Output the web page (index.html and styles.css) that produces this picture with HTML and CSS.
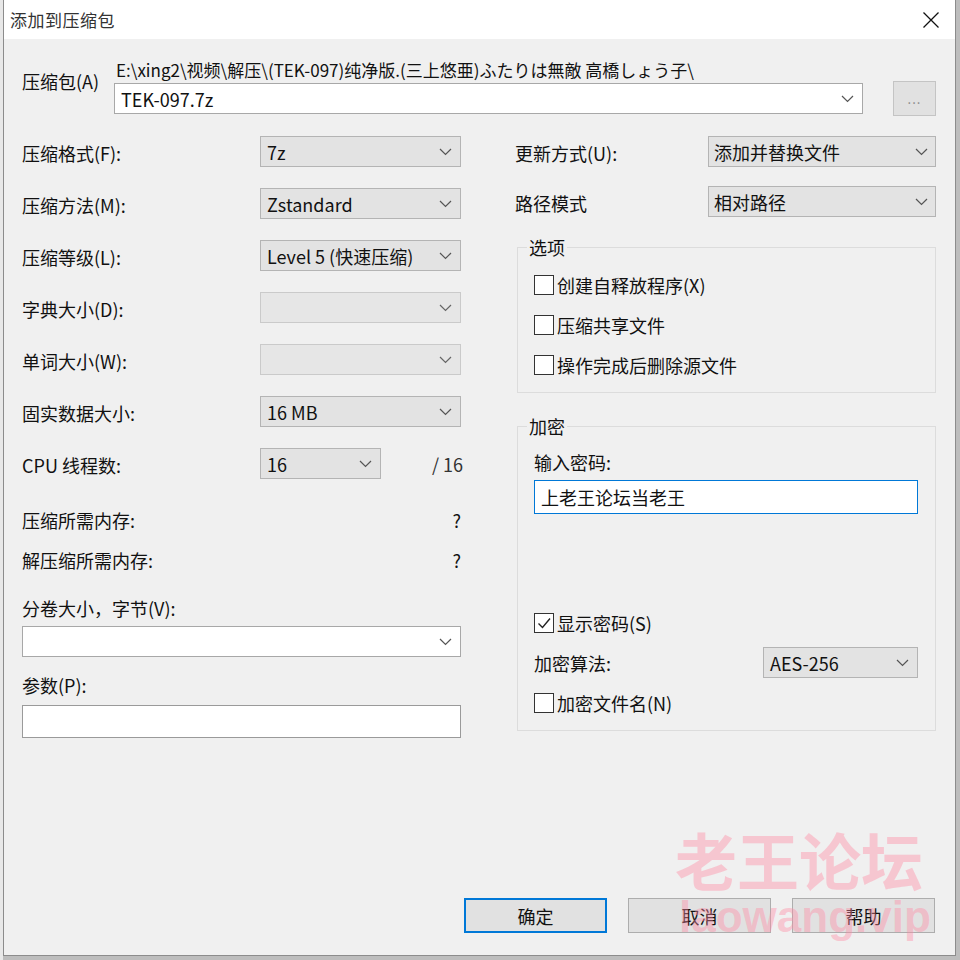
FILE: index.html
```html
<!DOCTYPE html>
<html lang="zh-CN">
<head>
<meta charset="utf-8">
<title>添加到压缩包</title>
<link rel="stylesheet" href="styles.css">
</head>
<body>
<div class="desktop">
  <div class="window">
    <div class="titlebar">
      <span class="title">添加到压缩包</span>
      <span class="close">
        <svg width="18" height="18" viewBox="0 0 18 18"><path d="M1.5 1.5 L16.5 16.5 M16.5 1.5 L1.5 16.5" stroke="#111" stroke-width="1.3" fill="none"/></svg>
      </span>
    </div>
    <div class="content">
      <div class="archive-row">
        <div class="archive-label">压缩包(A)</div>
        <div class="archive-main">
          <div class="path">E:\xing2\视频\解压\(TEK-097)纯净版.(三上悠亜)ふたりは無敵 高橋しょう子\</div>
          <div class="archive-combo-row">
            <div class="combo combo-white combo-archive"><span class="combo-text">TEK-097.7z</span><svg class="chev" width="13" height="8" viewBox="0 0 13 8"><path d="M1 1 L6.5 6.5 L12 1" stroke="#555" stroke-width="1.2" fill="none"/></svg></div>
            <div class="btn-browse">...</div>
          </div>
        </div>
      </div>

      <div class="columns">
        <div class="left-col">
          <div class="form-grid">
            <div class="lbl">压缩格式(F):</div>
            <div class="combo"><span class="combo-text">7z</span><svg class="chev" width="13" height="8" viewBox="0 0 13 8"><path d="M1 1 L6.5 6.5 L12 1" stroke="#555" stroke-width="1.2" fill="none"/></svg></div>

            <div class="lbl">压缩方法(M):</div>
            <div class="combo"><span class="combo-text">Zstandard</span><svg class="chev" width="13" height="8" viewBox="0 0 13 8"><path d="M1 1 L6.5 6.5 L12 1" stroke="#555" stroke-width="1.2" fill="none"/></svg></div>

            <div class="lbl">压缩等级(L):</div>
            <div class="combo"><span class="combo-text">Level 5 (快速压缩)</span><svg class="chev" width="13" height="8" viewBox="0 0 13 8"><path d="M1 1 L6.5 6.5 L12 1" stroke="#555" stroke-width="1.2" fill="none"/></svg></div>

            <div class="lbl">字典大小(D):</div>
            <div class="combo combo-disabled"><span class="combo-text"></span><svg class="chev" width="13" height="8" viewBox="0 0 13 8"><path d="M1 1 L6.5 6.5 L12 1" stroke="#666" stroke-width="1.2" fill="none"/></svg></div>

            <div class="lbl">单词大小(W):</div>
            <div class="combo combo-disabled"><span class="combo-text"></span><svg class="chev" width="13" height="8" viewBox="0 0 13 8"><path d="M1 1 L6.5 6.5 L12 1" stroke="#666" stroke-width="1.2" fill="none"/></svg></div>

            <div class="lbl">固实数据大小:</div>
            <div class="combo"><span class="combo-text">16 MB</span><svg class="chev" width="13" height="8" viewBox="0 0 13 8"><path d="M1 1 L6.5 6.5 L12 1" stroke="#555" stroke-width="1.2" fill="none"/></svg></div>

            <div class="lbl">CPU 线程数:</div>
            <div class="cpu-cell">
              <div class="combo combo-cpu"><span class="combo-text">16</span><svg class="chev" width="13" height="8" viewBox="0 0 13 8"><path d="M1 1 L6.5 6.5 L12 1" stroke="#555" stroke-width="1.2" fill="none"/></svg></div>
              <span class="cpu-total">/ 16</span>
            </div>
          </div>

          <div class="mem-row mem-first"><span>压缩所需内存:</span><span>?</span></div>
          <div class="mem-row"><span>解压缩所需内存:</span><span>?</span></div>

          <div class="field-label">分卷大小，字节(V):</div>
          <div class="combo combo-white combo-full"><span class="combo-text"></span><svg class="chev" width="13" height="8" viewBox="0 0 13 8"><path d="M1 1 L6.5 6.5 L12 1" stroke="#555" stroke-width="1.2" fill="none"/></svg></div>

          <div class="field-label">参数(P):</div>
          <div class="textbox"></div>
        </div>

        <div class="right-col">
          <div class="rrow">
            <div class="rlbl">更新方式(U):</div>
            <div class="combo combo-right"><span class="combo-text">添加并替换文件</span><svg class="chev" width="13" height="8" viewBox="0 0 13 8"><path d="M1 1 L6.5 6.5 L12 1" stroke="#555" stroke-width="1.2" fill="none"/></svg></div>
          </div>
          <div class="rrow rrow-second">
            <div class="rlbl">路径模式</div>
            <div class="combo combo-right"><span class="combo-text">相对路径</span><svg class="chev" width="13" height="8" viewBox="0 0 13 8"><path d="M1 1 L6.5 6.5 L12 1" stroke="#555" stroke-width="1.2" fill="none"/></svg></div>
          </div>

          <fieldset class="group group-options">
            <legend>选项</legend>
            <div class="check"><span class="box"></span><span>创建自释放程序(X)</span></div>
            <div class="check"><span class="box"></span><span>压缩共享文件</span></div>
            <div class="check"><span class="box"></span><span>操作完成后删除源文件</span></div>
          </fieldset>

          <fieldset class="group group-crypt">
            <legend>加密</legend>
            <div class="pw-label">输入密码:</div>
            <div class="pw-input">上老王论坛当老王</div>
            <div class="check check-show"><span class="box"><svg width="18" height="18" viewBox="0 0 18 18"><path d="M3.5 9.5 L7.5 13.5 L15 4.5" stroke="#222" stroke-width="1.4" fill="none"/></svg></span><span>显示密码(S)</span></div>
            <div class="algo-row">
              <span>加密算法:</span>
              <div class="combo combo-algo"><span class="combo-text">AES-256</span><svg class="chev" width="13" height="8" viewBox="0 0 13 8"><path d="M1 1 L6.5 6.5 L12 1" stroke="#555" stroke-width="1.2" fill="none"/></svg></div>
            </div>
            <div class="check check-last"><span class="box"></span><span>加密文件名(N)</span></div>
          </fieldset>
        </div>
      </div>

      <div class="buttons">
        <div class="btn btn-default">确定</div>
        <div class="btn">取消</div>
        <div class="btn">帮助</div>
      </div>
    </div>
    <div class="watermark">
      <div class="wm-cn">老王论坛</div>
      <div class="wm-en">laowang.vip</div>
    </div>
  </div>
</div>
</body>
</html>
```

FILE: styles.css
```css
* { box-sizing: border-box; }

html, body {
  margin: 0;
  padding: 0;
}

body {
  width: 960px;
  height: 960px;
  overflow: hidden;
  background: #cfcfcf;
  font-family: "Noto Sans CJK SC", "Noto Sans CJK JP", sans-serif;
  font-size: 18px;
  color: #111;
}

.desktop {
  width: 960px;
  height: 960px;
  background: linear-gradient(90deg, #e8e8e8 0 3px, #bdbdbd 3px);
}

.window {
  position: relative;
  margin-left: 3px;
  width: 953px;
  height: 956px;
  background: #f0f0f0;
  border: 1px solid #8c8c8c;
  border-top: none;
  display: flex;
  flex-direction: column;
}

.titlebar {
  height: 39px;
  background: #fff;
  display: flex;
  align-items: center;
  justify-content: space-between;
  padding: 0 15px 0 6px;
  flex: none;
}

.title {
  font-size: 17px;
  color: #333;
  letter-spacing: 0.5px;
}

.close {
  display: flex;
  width: 18px;
  height: 18px;
}

.content {
  flex: 1;
  display: flex;
  flex-direction: column;
  padding: 20px 19px 22px 18px;
}

/* archive row */
.archive-row {
  display: flex;
}

.archive-label {
  width: 92px;
  margin-top: 11px;
  line-height: 22px;
  flex: none;
}

.archive-main {
  flex: 1;
}

.path {
  line-height: 22px;
  padding-left: 2px;
  font-size: 17px;
  white-space: nowrap;
}

.archive-combo-row {
  display: flex;
  align-items: center;
  gap: 30px;
  height: 35px;
}

.btn-browse {
  width: 43px;
  height: 35px;
  background: #e1e1e1;
  border: 1px solid #c4c4c4;
  color: #888;
  font-size: 13px;
  display: flex;
  align-items: center;
  justify-content: center;
  letter-spacing: 1px;
}

/* combos */
.combo {
  height: 31px;
  background: #e3e3e3;
  border: 1px solid #b4b4b4;
  display: flex;
  align-items: center;
  justify-content: space-between;
  padding: 0 8px 0 6px;
}

.combo-text {
  white-space: nowrap;
  line-height: 1;
}

.combo-white {
  background: #fff;
  border-color: #a8a8a8;
}

.combo-archive {
  flex: 1;
}

.combo-disabled {
  background: #e6e6e6;
  border-color: #cacaca;
}

.chev {
  flex: none;
}

/* columns */
.columns {
  display: flex;
  gap: 54px;
  margin-top: 20px;
}

.left-col {
  width: 439px;
  flex: none;
  display: flex;
  flex-direction: column;
}

.right-col {
  width: 421px;
  flex: none;
  display: flex;
  flex-direction: column;
}

.form-grid {
  display: grid;
  grid-template-columns: 238px 201px;
  grid-auto-rows: 31px;
  row-gap: 21px;
  align-items: center;
}

.lbl {
  line-height: 22px;
  padding-top: 3px;
}

.cpu-cell {
  display: flex;
  align-items: center;
  justify-content: space-between;
  margin-right: -2px;
}

.combo-cpu {
  width: 121px;
}

.cpu-total {
  color: #333;
}

.mem-row {
  height: 40px;
  display: flex;
  align-items: center;
  justify-content: space-between;
  padding-right: 0;
}

.mem-first {
  margin-top: 21px;
}

.field-label {
  line-height: 22px;
  margin-top: 17px;
}

.combo-full {
  margin-top: 7px;
}

.textbox {
  margin-top: 9px;
  height: 33px;
  background: #fff;
  border: 1px solid #9a9a9a;
}

/* right column */
.rrow {
  display: flex;
  align-items: center;
  height: 31px;
}

.rrow-second {
  margin-top: 19px;
}

.rlbl {
  width: 193px;
  flex: none;
  padding-top: 2px;
}

.combo-right {
  flex: 1;
  padding-right: 7px;
  padding-left: 5px;
}

.group {
  margin: 19px 0 0 2px;
  border: 1px solid #dcdcdc;
  padding: 0 17px 7px 16px;
  min-width: 0;
}

.group legend {
  line-height: 22px;
  padding: 0 2px;
  margin-left: -7px;
}

.group-options {
  padding-top: 7px;
}

.group-crypt {
  margin-top: 22px;
}

.check {
  display: flex;
  align-items: center;
  height: 40px;
  gap: 3px;
}

.box {
  width: 20px;
  height: 20px;
  border: 1px solid #333;
  background: #fff;
  display: flex;
  align-items: center;
  justify-content: center;
  flex: none;
}

.pw-label {
  line-height: 22px;
  margin-top: 14px;
}

.pw-input {
  margin-top: 7px;
  height: 34px;
  background: #fff;
  border: 1px solid #0078d7;
  padding-left: 6px;
  display: flex;
  align-items: center;
}

.check-show {
  margin-top: 89px;
}

.algo-row {
  display: flex;
  align-items: center;
  justify-content: space-between;
  height: 31px;
  margin-top: 4px;
}

.combo-algo {
  width: 155px;
}

.check-last {
  margin-top: 5px;
}

/* buttons */
.buttons {
  margin-top: auto;
  display: flex;
  justify-content: flex-end;
  gap: 21px;
  padding-right: 1px;
}

.btn {
  width: 143px;
  height: 35px;
  background: #e1e1e1;
  border: 1px solid #adadad;
  display: flex;
  align-items: center;
  justify-content: center;
}

.btn-default {
  border: 2px solid #0078d7;
}

/* watermark overlay */
.watermark {
  position: absolute;
  left: 671px;
  top: 824px;
  pointer-events: none;
  color: rgba(255, 140, 165, 0.42);
}

.wm-cn {
  font-family: "Noto Sans CJK SC", sans-serif;
  font-weight: 700;
  font-size: 62px;
  line-height: 70px;
}

.wm-en {
  font-family: "Liberation Sans", sans-serif;
  font-weight: 700;
  font-size: 44px;
  line-height: 50px;
  margin-top: -2px;
  margin-left: 4px;
}
```
